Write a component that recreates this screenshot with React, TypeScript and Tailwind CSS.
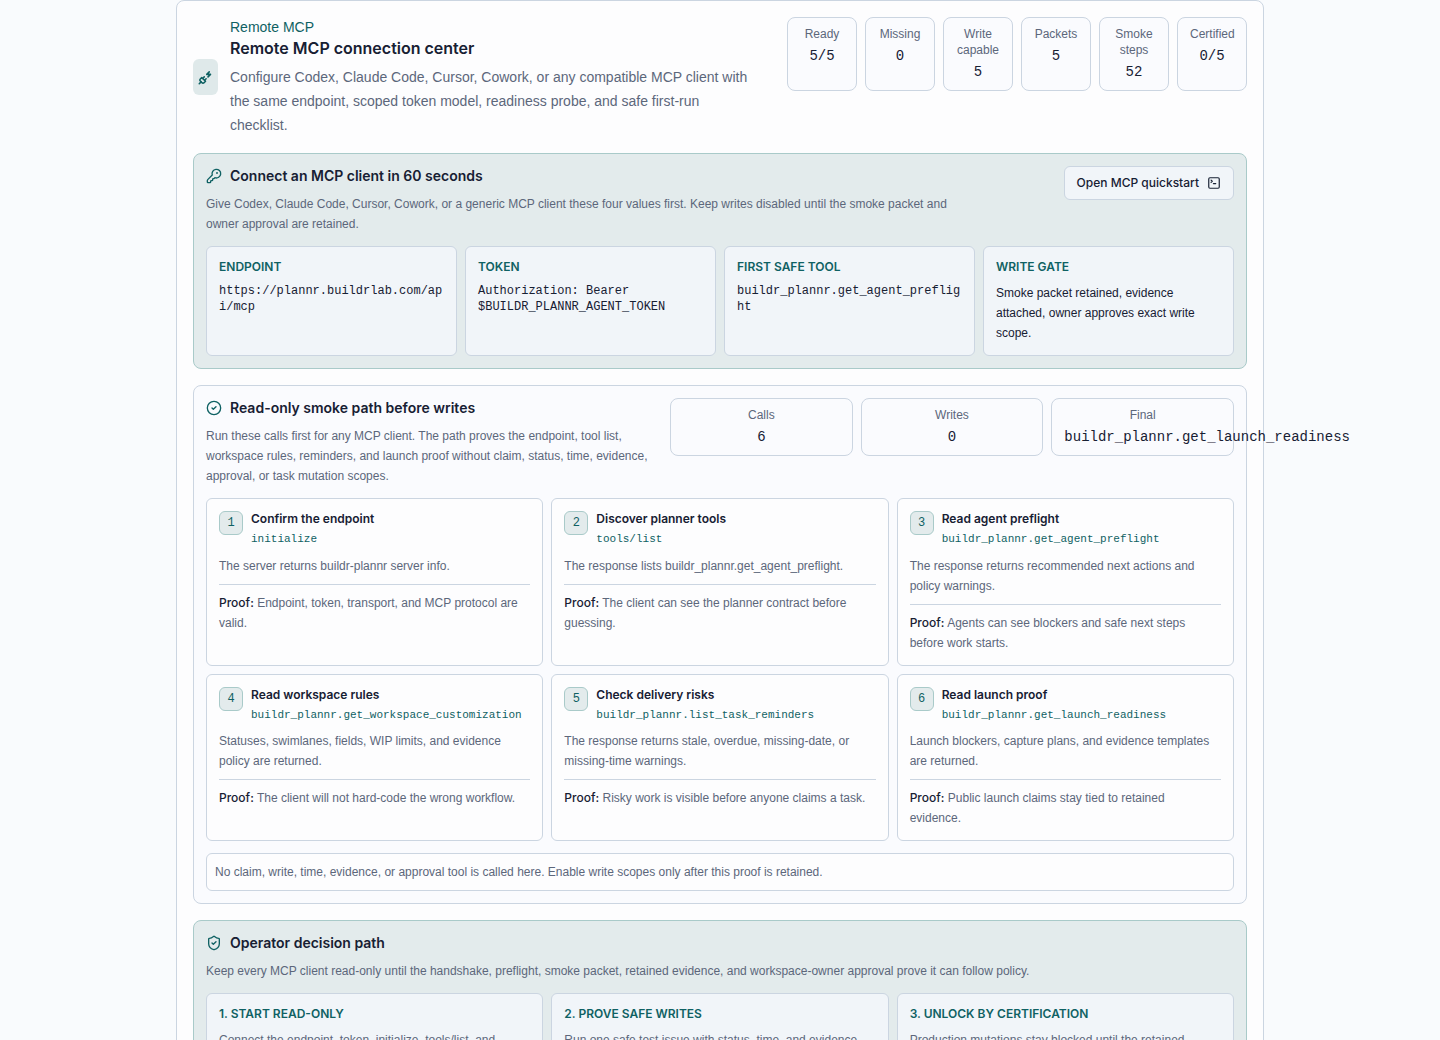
import type { ReactNode } from "react";
import { CircleCheck, KeyRound, PlugZap, ShieldCheck, SquareTerminal } from "lucide-react";

const mono = "font-['Liberation_Mono',monospace]";
const display = "font-['Inter',sans-serif]";

const readiness = [
  { label: "Ready", value: "5/5" },
  { label: "Missing", value: "0" },
  { label: "Write capable", value: "5" },
  { label: "Packets", value: "5" },
  { label: "Smoke steps", value: "52" },
  { label: "Certified", value: "0/5" },
];

const smokeStats = [
  { label: "Calls", value: "6" },
  { label: "Writes", value: "0" },
  { label: "Final", value: "buildr_plannr.get_launch_readiness" },
];

const connection = [
  { title: "Endpoint", value: "https://plannr.buildrlab.com/api/mcp", code: true },
  { title: "Token", value: "Authorization: Bearer\n$BUILDR_PLANNR_AGENT_TOKEN", code: true },
  { title: "First safe tool", value: "buildr_plannr.get_agent_preflight", code: true },
  {
    title: "Write gate",
    value: "Smoke packet retained, evidence attached, owner approves exact write scope.",
    code: false,
  },
];

const steps = [
  {
    title: "Confirm the endpoint",
    tool: "initialize",
    text: "The server returns buildr-plannr server info.",
    proof: "Endpoint, token, transport, and MCP protocol are valid.",
  },
  {
    title: "Discover planner tools",
    tool: "tools/list",
    text: "The response lists buildr_plannr.get_agent_preflight.",
    proof: "The client can see the planner contract before guessing.",
  },
  {
    title: "Read agent preflight",
    tool: "buildr_plannr.get_agent_preflight",
    text: "The response returns recommended next actions and policy warnings.",
    proof: "Agents can see blockers and safe next steps before work starts.",
  },
  {
    title: "Read workspace rules",
    tool: "buildr_plannr.get_workspace_customization",
    text: "Statuses, swimlanes, fields, WIP limits, and evidence policy are returned.",
    proof: "The client will not hard-code the wrong workflow.",
  },
  {
    title: "Check delivery risks",
    tool: "buildr_plannr.list_task_reminders",
    text: "The response returns stale, overdue, missing-date, or missing-time warnings.",
    proof: "Risky work is visible before anyone claims a task.",
  },
  {
    title: "Read launch proof",
    tool: "buildr_plannr.get_launch_readiness",
    text: "Launch blockers, capture plans, and evidence templates are returned.",
    proof: "Public launch claims stay tied to retained evidence.",
  },
];

const decisions = [
  { title: "1. Start read-only", text: "Connect the endpoint, token, initialize, tools/list, and" },
  { title: "2. Prove safe writes", text: "Run one safe test issue with status, time, and evidence" },
  { title: "3. Unlock by certification", text: "Production mutations stay blocked until the retained" },
];

function Stat({ label, value }: { label: string; value: string }) {
  return (
    <div className="min-w-0 rounded-lg border border-[#cbd5e1] bg-[#fafbfe] px-3 py-2 text-center">
      <dt className="text-xs text-[#5c677b]">{label}</dt>
      <dd className={`mt-1 text-sm ${mono}`}>{value}</dd>
    </div>
  );
}

function SectionTitle({ icon, children }: { icon: ReactNode; children: ReactNode }) {
  return (
    <div className="flex items-center gap-2 text-[#0f6163]">
      {icon}
      <h3 className={`text-sm font-semibold text-[#172033] ${display}`}>{children}</h3>
    </div>
  );
}

export default function App() {
  return (
    <main className="min-h-screen bg-[#f9fbfd] px-4 font-['Liberation_Sans',sans-serif] text-[#172033]">
      <section className="mx-auto flex max-w-[1088px] flex-col gap-4 rounded-lg border border-[#cbd5e1] bg-[#fdfdfe] p-4">
        <header className="flex items-start justify-between gap-4">
          <div className="flex min-w-0 flex-1 items-center gap-3">
            <span className="flex h-9 w-[25px] shrink-0 items-center justify-center rounded-md bg-[#dfe9ea] text-[#0f6163]">
              <PlugZap size={15} strokeWidth={2.5} />
            </span>
            <div className="min-w-0">
              <p className="text-sm text-[#0f6163]">Remote MCP</p>
              <h2 className={`text-base leading-[22px] font-semibold ${display}`}>Remote MCP connection center</h2>
              <p className="mt-1.5 max-w-[528px] text-sm leading-6 text-[#5c677b]">
                Configure Codex, Claude Code, Cursor, Cowork, or any compatible MCP client with the same endpoint,
                scoped token model, readiness probe, and safe first-run checklist.
              </p>
            </div>
          </div>
          <dl className="grid w-[460px] shrink-0 grid-cols-6 gap-2">
            {readiness.map((s) => (
              <Stat key={s.label} {...s} />
            ))}
          </dl>
        </header>

        <section className="rounded-lg border border-[#a9cac9] bg-[#e3ebec] p-3">
          <div className="flex items-start justify-between gap-3">
            <div>
              <SectionTitle icon={<KeyRound size={16} />}>Connect an MCP client in 60 seconds</SectionTitle>
              <p className="mt-2 max-w-3xl text-xs leading-5 text-[#5c677b]">
                Give Codex, Claude Code, Cursor, Cowork, or a generic MCP client these four values first. Keep writes
                disabled until the smoke packet and owner approval are retained.
              </p>
            </div>
            <button
              type="button"
              className={`flex shrink-0 items-center gap-2 rounded-md border border-[#cbd5e1] bg-[#f1f5f9] px-3 py-2 text-xs font-medium ${display}`}
            >
              Open MCP quickstart
              <SquareTerminal size={14} />
            </button>
          </div>
          <div className="mt-3 grid grid-cols-4 gap-2">
            {connection.map((c) => (
              <div key={c.title} className="rounded-md border border-[#cbd5e1] bg-[#f1f5f9] p-3">
                <h4 className={`text-xs font-semibold text-[#0f6163] uppercase ${display}`}>{c.title}</h4>
                {c.code ? (
                  <code className={`mt-2 block text-xs break-all whitespace-pre-line ${mono}`}>{c.value}</code>
                ) : (
                  <p className="mt-2 text-xs leading-5">{c.value}</p>
                )}
              </div>
            ))}
          </div>
        </section>

        <section className="rounded-lg border border-[#cbd5e1] bg-[#fafbfe] p-3">
          <div className="flex items-start gap-3">
            <div className="min-w-0 flex-1">
              <SectionTitle icon={<CircleCheck size={16} />}>Read-only smoke path before writes</SectionTitle>
              <p className="mt-2 text-xs leading-5 text-[#5c677b]">
                Run these calls first for any MCP client. The path proves the endpoint, tool list, workspace rules,
                reminders, and launch proof without claim, status, time, evidence, approval, or task mutation scopes.
              </p>
            </div>
            <dl className="grid w-[564px] shrink-0 grid-cols-3 gap-2">
              {smokeStats.map((s) => (
                <Stat key={s.label} {...s} />
              ))}
            </dl>
          </div>
          <ol className="mt-3 grid grid-cols-3 gap-2">
            {steps.map((s, i) => (
              <li key={s.title} className="rounded-md border border-[#cbd5e1] bg-[#fdfdfe] p-3 text-xs">
                <div className="flex items-start gap-2">
                  <span
                    className={`flex size-6 shrink-0 items-center justify-center rounded-md border border-[#a9cac9] bg-[#e3ebec] text-[#0f6163] ${mono}`}
                  >
                    {i + 1}
                  </span>
                  <div className="min-w-0">
                    <h4 className={`font-semibold ${display}`}>{s.title}</h4>
                    <code className={`mt-1 block text-[11px] leading-normal text-[#0f6163] ${mono}`}>{s.tool}</code>
                  </div>
                </div>
                <p className="mt-2 leading-5 text-[#5c677b]">{s.text}</p>
                <p className="mt-2 border-t border-[#cbd5e1] pt-2 pr-1 leading-5 text-[#5c677b]">
                  <span className={`font-medium text-[#172033] ${display}`}>Proof:</span> {s.proof}
                </p>
              </li>
            ))}
          </ol>
          <p className="mt-3 rounded-md border border-[#cbd5e1] bg-[#fdfdfe] p-2 text-xs leading-5 text-[#5c677b]">
            No claim, write, time, evidence, or approval tool is called here. Enable write scopes only after this proof
            is retained.
          </p>
        </section>

        <section className="rounded-lg border border-[#a9cac9] bg-[#e3ebec] p-3">
          <SectionTitle icon={<ShieldCheck size={16} />}>Operator decision path</SectionTitle>
          <p className="mt-2 text-xs leading-5 text-[#5c677b]">
            Keep every MCP client read-only until the handshake, preflight, smoke packet, retained evidence, and
            workspace-owner approval prove it can follow policy.
          </p>
          <div className="mt-3 grid grid-cols-3 gap-2">
            {decisions.map((d) => (
              <div key={d.title} className="rounded-md border border-[#cbd5e1] bg-[#f1f5f9] p-3 text-xs">
                <h4 className={`font-semibold text-[#0f6163] uppercase ${display}`}>{d.title}</h4>
                <p className="mt-2 leading-5 text-[#5c677b]">{d.text}</p>
              </div>
            ))}
          </div>
        </section>
      </section>
    </main>
  );
}
